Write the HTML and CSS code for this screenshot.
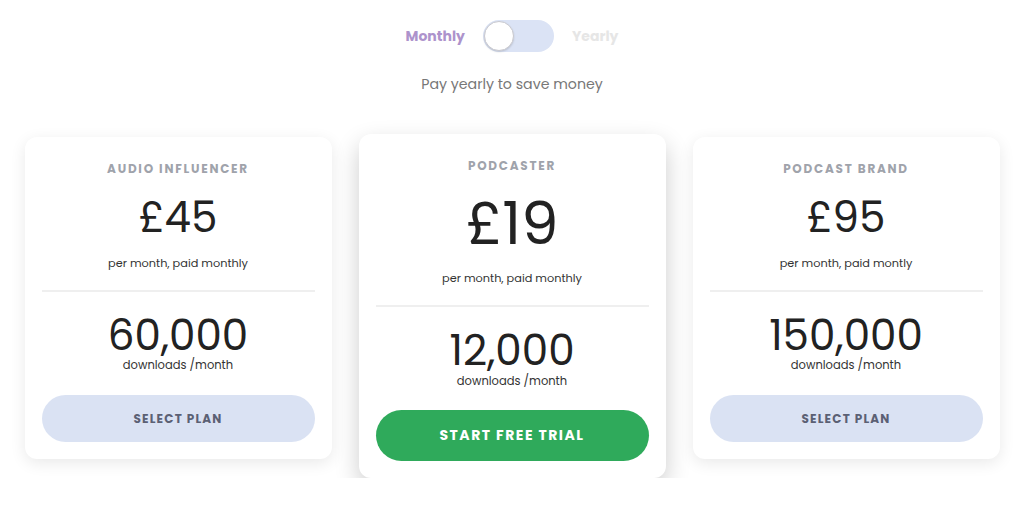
FILE: index.html
```html
<!DOCTYPE html>
<html lang="en">
<head>
<meta charset="utf-8">
<title>Pricing</title>
<link rel="stylesheet" href="styles.css">
</head>
<body>
<main class="page">
  <div class="switch-row">
    <span class="period period-active">Monthly</span>
    <span class="toggle"><span class="knob"></span></span>
    <span class="period period-off">Yearly</span>
  </div>
  <p class="hint">Pay yearly to save money</p>
  <section class="plans">
    <article class="card">
      <h2 class="plan-name">AUDIO INFLUENCER</h2>
      <div class="price">£45</div>
      <div class="billing">per month, paid monthly</div>
      <hr class="divider">
      <div class="count">60,000</div>
      <div class="unit">downloads /month</div>
      <button class="btn btn-select">SELECT PLAN</button>
    </article>
    <article class="card card-featured">
      <h2 class="plan-name">PODCASTER</h2>
      <div class="price">£19</div>
      <div class="billing">per month, paid monthly</div>
      <hr class="divider">
      <div class="count">12,000</div>
      <div class="unit">downloads /month</div>
      <button class="btn btn-trial">START FREE TRIAL</button>
    </article>
    <article class="card">
      <h2 class="plan-name">PODCAST BRAND</h2>
      <div class="price">£95</div>
      <div class="billing">per month, paid montly</div>
      <hr class="divider">
      <div class="count">150,000</div>
      <div class="unit">downloads /month</div>
      <button class="btn btn-select">SELECT PLAN</button>
    </article>
  </section>
</main>
</body>
</html>
```

FILE: styles.css
```css
* { box-sizing: border-box; }
html, body { margin: 0; padding: 0; background: #ffffff; }
body {
  font-family: "Poppins", "Inter", "Noto Sans", "DejaVu Sans", sans-serif;
  color: #222222;
}
.page {
  display: flex;
  flex-direction: column;
  align-items: center;
  padding-top: 20px;
}
.switch-row {
  display: flex;
  align-items: center;
  gap: 18px;
  height: 32px;
}
.period {
  font-size: 14px;
  font-weight: 700;
  line-height: 20px;
}
.period-active { color: #ad93cc; }
.period-off { color: #e6e6e6; }
.toggle {
  width: 71px;
  height: 32px;
  border-radius: 16px;
  background: #dbe3f5;
  display: flex;
  align-items: center;
  padding: 0 1px;
}
.knob {
  width: 30px;
  height: 30px;
  border-radius: 50%;
  background: #ffffff;
  border: 1px solid #c9c9cf;
  box-shadow: 0 1px 2px rgba(0,0,0,0.15);
}
.hint {
  margin: 22px 0 0;
  font-size: 14.2px;
  line-height: 20px;
  color: #777777;
}
.plans {
  display: flex;
  justify-content: center;
  align-items: flex-start;
  gap: 27px;
  margin-top: 40px;
}
.card {
  width: 307px;
  margin-top: 3px;
  background: #ffffff;
  border-radius: 12px;
  box-shadow: 0 4px 16px rgba(0,0,0,0.09);
  padding: 24px 17px 17px;
  display: flex;
  flex-direction: column;
  align-items: center;
  text-align: center;
}
.plan-name {
  margin: 0;
  font-size: 12px;
  line-height: 16px;
  font-weight: 700;
  letter-spacing: 1.75px;
  color: #9fa3ab;
}
.price {
  margin-top: 16px;
  font-size: 42px;
  line-height: 50px;
  font-weight: 400;
  color: #222222;
}
.billing {
  margin-top: 11px;
  font-size: 11.3px;
  line-height: 18px;
  color: #333333;
}
.divider {
  width: 100%;
  margin: 18px 0 0;
  border: 0;
  height: 2px;
  background: #efefef;
}
.count {
  margin-top: 22px;
  font-size: 42px;
  line-height: 44px;
  font-weight: 400;
  color: #222222;
}
.unit {
  font-size: 11.5px;
  line-height: 14px;
  color: #333333;
}
.btn {
  width: 100%;
  border: 0;
  border-radius: 26px;
  font-family: inherit;
  font-weight: 700;
  cursor: pointer;
}
.btn-select {
  margin-top: 23px;
  height: 47px;
  background: #dae2f3;
  color: #5b6074;
  font-size: 12px;
  letter-spacing: 1.2px;
}
.card-featured {
  margin-top: 0;
  padding-top: 24px;
  box-shadow: 0 10px 24px rgba(0,0,0,0.2);
}
.card-featured .price {
  margin-top: 17px;
  font-size: 59px;
  line-height: 66px;
}
.card-featured .billing { margin-top: 12px; }
.card-featured .count { margin-top: 22px; }
.card-featured .unit { margin-top: 1px; }
.btn-trial {
  margin-top: 22px;
  height: 51px;
  background: #2faa5b;
  color: #ffffff;
  font-size: 14px;
  letter-spacing: 1.5px;
}
```
